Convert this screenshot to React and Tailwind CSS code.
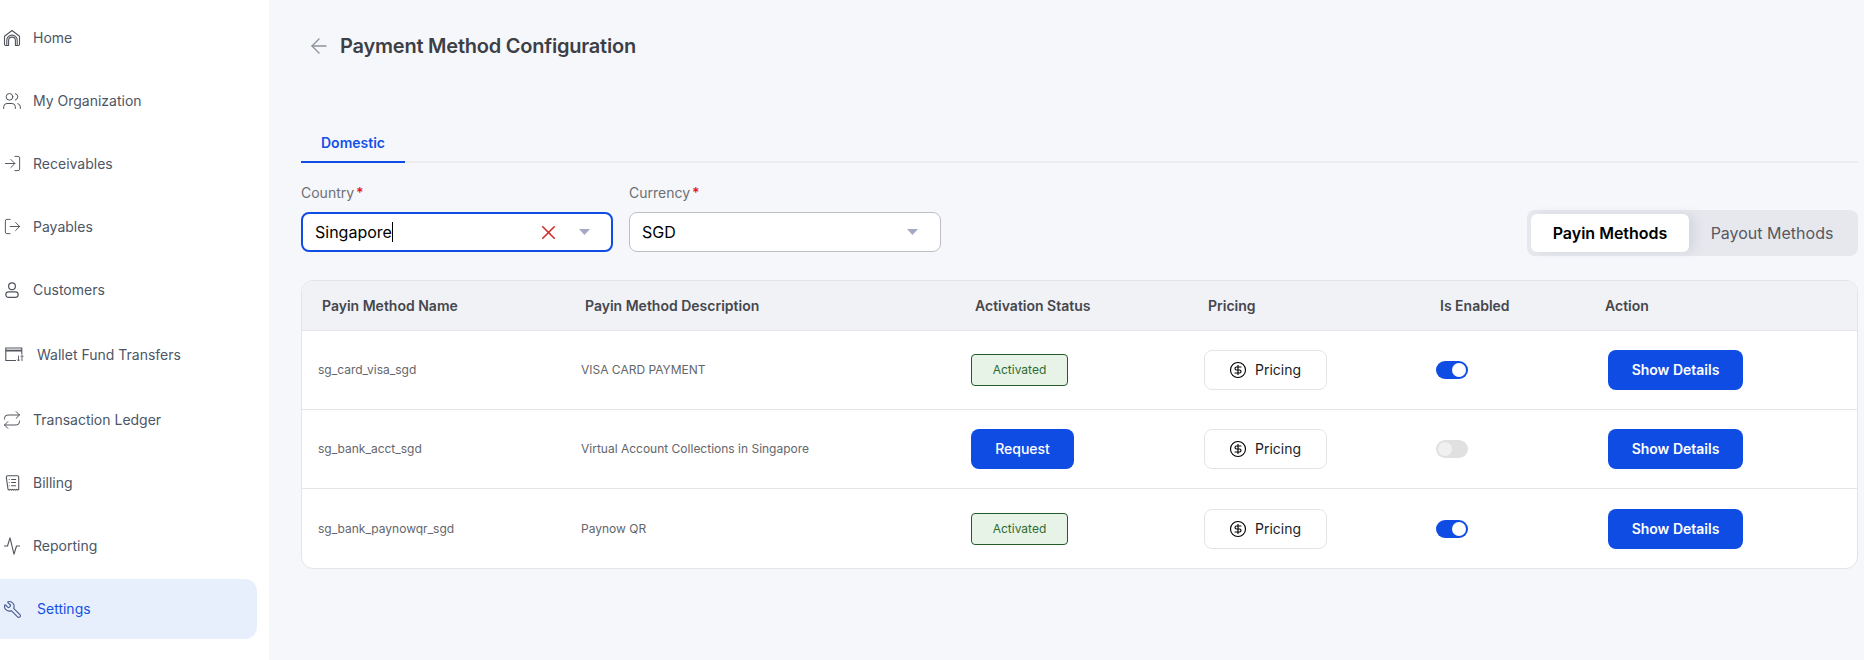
import React from "react";
import { ArrowLeft, X, CircleDollarSign, Users, LogIn, LogOut, Repeat, Wrench } from "lucide-react";

const HomeIcon = () => (
  <svg width="18" height="18" viewBox="0 0 18 18" fill="none" stroke="currentColor" strokeWidth="1.1" strokeLinejoin="round">
    <path d="M1.5 7.2 9 1.5l7.5 5.7v8.4a.9.9 0 0 1-.9.9h-3.2v-5a3.4 3.4 0 0 0-6.8 0v5H2.4a.9.9 0 0 1-.9-.9z" />
    <path d="M3.8 16.5v-5.2a5.2 5.2 0 0 1 10.4 0v5.2" />
  </svg>
);

const PersonIcon = () => (
  <svg width="14" height="16" viewBox="0 0 14 16" fill="none" stroke="currentColor" strokeWidth="1.2">
    <circle cx="7" cy="4.2" r="3.4" />
    <rect x="0.8" y="9.8" width="12.4" height="5.6" rx="2.8" />
  </svg>
);

const WalletIcon = () => (
  <svg width="19" height="15" viewBox="0 0 19 15" fill="none" stroke="currentColor" strokeWidth="1.1" className="ml-1">
    <path d="M11 13.5H.8V1h16v6.5" />
    <path d="M.8 3.6h16" strokeWidth="1.8" />
    <path d="M13.5 8.5v5.5m0 0-1.3-1.4m1.3 1.4 1.3-1.4M17 14V8.5m0 0-1.3 1.4M17 8.5l1.3 1.4" strokeWidth="0.9" />
  </svg>
);

const BillingIcon = () => (
  <svg width="15" height="16" viewBox="0 0 16 18" fill="none" stroke="currentColor" strokeWidth="1.2">
    <path d="M1 2.4A1.6 1.6 0 0 1 2.6.8h10.8A1.6 1.6 0 0 1 15 2.4v13.8l-1.2.9-1.2-.9-1.2.9-1.2-.9-1.2.9-1.2-.9-1.2.9-1.2-.9-1.2.9-1.2-.9z" />
    <path d="M6.5 5h5.5M6.5 8.5h5.5M6.5 12h5.5" />
    <path d="M3.8 5h.9M3.8 8.5h.9M3.8 12h.9" />
  </svg>
);

const PulseIcon = () => (
  <svg width="16" height="18" viewBox="0 0 16 18" fill="none" stroke="currentColor" strokeWidth="1.1" strokeLinejoin="round">
    <path d="M0 9h3.5L6 .8l4 16.4L12.5 9H16" />
  </svg>
);

const nav = [
  { label: "Home", icon: <HomeIcon />, h: "h-[63px]" },
  { label: "My Organization", icon: <Users size={20} strokeWidth={1.2} />, h: "h-[63px]" },
  { label: "Receivables", icon: <LogIn size={19} strokeWidth={1.2} />, h: "h-[63px]" },
  { label: "Payables", icon: <LogOut size={19} strokeWidth={1.2} />, h: "h-[63px]" },
  { label: "Customers", icon: <PersonIcon />, h: "h-[63px]" },
  { label: "Wallet Fund Transfers", icon: <WalletIcon />, h: "h-[67px]", wide: true },
  { label: "Transaction Ledger", icon: <Repeat size={20} strokeWidth={1.2} />, h: "h-[63px]" },
  { label: "Billing", icon: <BillingIcon />, h: "h-[63px]" },
  { label: "Reporting", icon: <PulseIcon />, h: "h-[63px]" },
];

const methods = [
  { name: "sg_card_visa_sgd", desc: "VISA CARD PAYMENT", active: true },
  { name: "sg_bank_acct_sgd", desc: "Virtual Account Collections in Singapore", active: false },
  { name: "sg_bank_paynowqr_sgd", desc: "Paynow QR", active: true },
];

const Caret = () => (
  <svg width="11" height="6" viewBox="0 0 11 6" className="shrink-0">
    <polygon points="0,0 11,0 5.5,6" fill="#a5a9c6" />
  </svg>
);

const Switch = ({ on }) => (
  <div className={`flex h-[18px] w-8 items-center rounded-full px-0.5 ${on ? "justify-end bg-[#0f4ce3]" : "justify-start bg-[#e0e0e0]"}`}>
    <div className={`h-3.5 w-3.5 rounded-full ${on ? "bg-white" : "bg-[#f0f0f0]"}`} />
  </div>
);

const gridCols = "grid grid-cols-[263px_390px_233px_232px_165px_1fr]";

export default function App() {
  return (
    <div className="flex h-[660px] overflow-hidden bg-[#f6f7fb] font-['Inter',sans-serif]">
      {/* Sidebar */}
      <aside className="w-[269px] shrink-0 bg-white pt-[6px] pr-3 text-sm text-[#4d5666]">
        {nav.map((item) => (
          <div key={item.label} className={`flex items-center ${item.h}`}>
            <span className={`flex w-6 shrink-0 justify-center text-[#50545c] ${item.wide ? "mr-[13px]" : "mr-[9px]"}`}>{item.icon}</span>
            <span>{item.label}</span>
          </div>
        ))}
        <div className="mt-[2px] flex h-[60px] items-center rounded-r-xl bg-[#e8effc] text-[#1450e6]">
          <span className="mr-[13px] flex w-6 shrink-0 justify-center text-[#4a5a8c]">
            <Wrench size={19} strokeWidth={1.4} className="-scale-x-100" />
          </span>
          <span>Settings</span>
        </div>
      </aside>

      {/* Main */}
      <main className="min-w-0 flex-1 pt-[31px] pr-1.5 pl-8">
        <div className="flex h-[30px] items-center">
          <ArrowLeft size={24} strokeWidth={1.4} className="ml-[6px] mr-[9px] text-[#8d929c]" />
          <h1 className="text-xl font-semibold tracking-[-0.22px] text-[#3c3f46]">Payment Method Configuration</h1>
        </div>

        <div className="mt-16 border-b-2 border-[#ececf0]">
          <div className="-mb-[2px] flex h-[38px] w-[104px] items-center justify-center border-b-2 border-[#0f4ce3] text-sm font-semibold text-[#1450e6]">
            Domestic
          </div>
        </div>

        <div className="mt-5 flex items-end justify-between">
          <div className="mb-1 flex gap-4">
            <div>
              <label className="block h-5 text-sm leading-5 text-[#6f7073]">
                Country<span className="ml-0.5 font-semibold text-[#e21b1b]">*</span>
              </label>
              <div className="mt-[9px] flex h-10 w-[312px] items-center rounded-lg border-2 border-[#0f4ce3] bg-white pr-[21px] pl-3 text-black">
                <span>Singapore</span>
                <span className="h-5 w-px bg-black" />
                <X size={23} strokeWidth={1.7} className="ml-auto mr-[19px] text-[#d32f2f]" />
                <Caret />
              </div>
            </div>
            <div>
              <label className="block h-5 text-sm leading-5 text-[#6f7073]">
                Currency<span className="ml-0.5 font-semibold text-[#e21b1b]">*</span>
              </label>
              <div className="mt-[9px] flex h-10 w-[312px] items-center justify-between rounded-lg border border-[#bfc0c4] bg-white pr-[22px] pl-3 text-black">
                <span>SGD</span>
                <Caret />
              </div>
            </div>
          </div>

          <div className="flex h-[46px] w-[331px] items-center rounded-lg bg-[#e7e8ed] pl-1 text-base">
            <div className="flex h-[38px] w-[158px] items-center justify-center rounded-md bg-white font-semibold text-black shadow-[6px_0_10px_rgba(180,186,205,0.35)]">
              Payin Methods
            </div>
            <div className="flex-1 pr-[3px] text-center text-[#55585f]">Payout Methods</div>
          </div>
        </div>

        {/* Table */}
        <div className="mt-6 overflow-hidden rounded-xl border border-[#e3e4e8] bg-white">
          <div className={`${gridCols} h-[50px] items-center border-b border-[#e3e4e8] bg-[#f0f2f6] text-sm font-semibold text-[#45474d]`}>
            <div className="pl-5">Payin Method Name</div>
            <div className="pl-5">Payin Method Description</div>
            <div className="pl-5">Activation Status</div>
            <div className="pl-5">Pricing</div>
            <div className="pl-5">Is Enabled</div>
            <div className="pl-5">Action</div>
          </div>
          {methods.map((m, i) => (
            <div key={m.name} className={`${gridCols} h-[79px] items-center text-xs text-[#63666c] ${i < 2 ? "border-b border-[#e3e4e8]" : ""}`}>
              <div className="pl-4">{m.name}</div>
              <div className="pl-4">{m.desc}</div>
              <div className="pl-4">
                {m.active ? (
                  <div className="flex h-8 w-[97px] items-center justify-center rounded border border-[#235c2a] bg-[#e8f3e8] text-[#2e6b34]">Activated</div>
                ) : (
                  <button className="h-10 w-[103px] rounded-lg bg-[#0f4ce3] text-sm font-medium text-white">Request</button>
                )}
              </div>
              <div className="pl-4">
                <button className="flex h-10 w-[123px] items-center gap-2 rounded-lg border border-[#e4e4e6] bg-white pl-[24px] text-sm text-[#1c1c1f]">
                  <CircleDollarSign size={18} strokeWidth={1.5} className="text-black" />
                  Pricing
                </button>
              </div>
              <div className="pl-4">
                <Switch on={m.active} />
              </div>
              <div className="pl-[23px]">
                <button className="h-10 w-[135px] rounded-lg bg-[#0f4ce3] text-sm font-semibold text-white">Show Details</button>
              </div>
            </div>
          ))}
        </div>
      </main>
    </div>
  );
}
